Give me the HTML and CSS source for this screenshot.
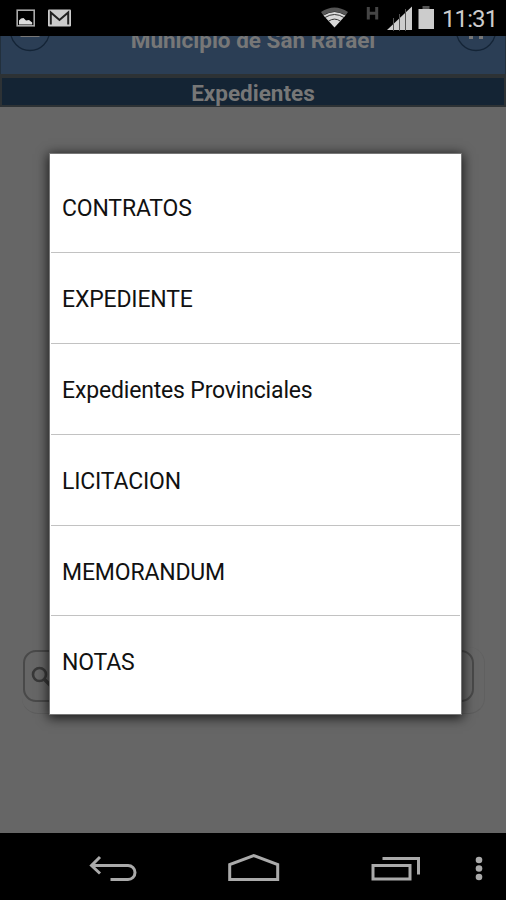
FILE: index.html
```html
<!DOCTYPE html>
<html lang="es">
<head>
  <meta charset="UTF-8">
  <meta name="viewport" content="width=device-width, initial-scale=1.0">
  <title>Municipio de San Rafael</title>
  <link rel="stylesheet" href="styles.css">
</head>
<body>
  <div class="status-bar">
    <svg class="status-left" width="90" height="36" viewBox="0 0 90 36">
      <rect x="17.2" y="10.2" width="17" height="15.6" fill="none" stroke="#aaa" stroke-width="1.6"/>
      <path d="M19 24.5v-4l2-2 2.500-.5 2.500 2.500 3-.5 3.200 2.500v2z" fill="#ddd"/>
      <rect x="48" y="9.500" width="23" height="17" rx="1" fill="#ccc"/>
      <path d="M50.800 24.500V12.500l8.700 7.500 8.700-7.500v12" fill="none" stroke="#222" stroke-width="2"/>
    </svg>
    <svg class="status-right" width="116" height="36" viewBox="0 0 116 36">
      <path d="M1 12Q14.500 3 28 12L25.500 15.500Q14.500 8 3.500 15.500Z" fill="#555"/>
      <path d="M3.500 15.500Q14.500 8.500 25.500 15.500L14.500 27.500Z" fill="#d8d8d8"/>
      <path d="M5 17.500Q14.500 11.500 24 17.500M8.500 21.200Q14.500 17 20.500 21.200" fill="none" stroke="#333" stroke-width="1"/>
      <path d="M48.300 7v12.500M56.700 7v12.500M48.300 13.300h9" fill="none" stroke="#454545" stroke-width="3"/>
      <path d="M67 30L92 6.500V30Z" fill="#ccc"/>
      <path d="M73.500 18v13M79.500 14v17M85.500 9v22" stroke="#555" stroke-width="1"/>
      <rect x="102.500" y="6" width="7" height="4" fill="#555"/>
      <rect x="98.500" y="9" width="15.500" height="20" fill="#ccc"/>
    </svg>
    <span class="clock">11:31</span>
  </div>

  <div class="header">
    <svg class="header-icon" width="42" height="38" viewBox="0 0 42 38">
      <circle cx="21" cy="-5" r="19.500" fill="none" stroke="#142436" stroke-width="1.300"/>
      <path d="M11.500 0h19" stroke="#777" stroke-width="2"/>
    </svg>
    <h1>Municipio de San Rafael</h1>
    <svg class="header-icon" width="42" height="38" viewBox="0 0 42 38">
      <circle cx="21" cy="-5" r="19.500" fill="none" stroke="#142436" stroke-width="1.300"/>
      <path d="M14 0h4v3h-4zM24 0h4v3h-4z" fill="#777"/>
    </svg>
  </div>
  <h2 class="section-title">Expedientes</h2>

  <div class="content">
    <div class="search-shadow">
      <div class="search-box">
        <svg width="26" height="26" viewBox="0 0 26 26">
          <circle cx="10.500" cy="10.500" r="6.500" fill="none" stroke="#383838" stroke-width="2.600"/>
          <path d="M15 15l7 7" stroke="#383838" stroke-width="3.500"/>
        </svg>
      </div>
    </div>
    <ul class="dialog">
      <li>CONTRATOS</li>
      <li>EXPEDIENTE</li>
      <li>Expedientes Provinciales</li>
      <li>LICITACION</li>
      <li>MEMORANDUM</li>
      <li>NOTAS</li>
    </ul>
  </div>

  <div class="nav-bar">
    <svg width="506" height="67" viewBox="0 0 506 67" fill="none" stroke="#aaa" stroke-width="3">
      <path d="M100 24l-8.500 8.500 8.500 8M92 32.500h36a7 7 0 0 1 0 14h-17.500"/>
      <path d="M229.700 46.500V31.500l24-9 24 9v15z"/>
      <path d="M373 32.500h37v13.500h-37zM382.500 25.500h36v16"/>
      <g fill="#aaa" stroke="none">
        <circle cx="479" cy="27" r="3.300"/>
        <circle cx="479" cy="35.500" r="3.300"/>
        <circle cx="479" cy="44" r="3.300"/>
      </g>
    </svg>
  </div>
</body>
</html>
```

FILE: styles.css
```css
body {
  margin: 0;
  width: 506px;
  height: 900px;
  overflow: hidden;
  display: flex;
  flex-direction: column;
  background-color: #666;
  font-family: Roboto, "Liberation Sans", sans-serif;
}

.status-bar {
  height: 36px;
  background-color: #000;
  display: flex;
}

.status-right {
  margin-left: 230px;
}

.clock {
  margin-left: 6px;
  line-height: 38px;
  font-size: 24px;
  letter-spacing: -0.9px;
  color: #ccc;
  white-space: nowrap;
}

.header {
  height: 38px;
  box-sizing: border-box;
  padding: 0 8px;
  border-left: 1px solid #22303d;
  border-right: 1px solid #22303d;
  background-color: #2b3e55;
  display: flex;
  justify-content: space-between;
  overflow: hidden;
}

.header h1 {
  margin: -9px 0 0;
  font-size: 22.5px;
  line-height: 27px;
  color: #777;
  white-space: nowrap;
}

.section-title {
  margin: 0;
  height: 33px;
  box-sizing: border-box;
  border: 2px solid #2d3235;
  border-top-width: 4px;
  background-color: #142434;
  font-size: 22.5px;
  line-height: 30px;
  text-align: center;
  color: #777;
}

.content {
  position: relative;
  display: flex;
  flex-direction: column;
  justify-content: flex-end;
  height: 726px;
  box-sizing: border-box;
  padding-bottom: 119px;
}

.search-shadow {
  box-sizing: border-box;
  height: 67px;
  margin: 0 21px 0 22px;
  padding: 3px 10px 12px 1px;
  border-radius: 16px;
  border-bottom: 1px solid #5d5d5d;
  border-right: 1px solid #606060;
}

.search-box {
  height: 52px;
  box-sizing: border-box;
  padding: 12px 4px;
  border: 2px solid #494949;
  border-radius: 13px;
}

/* the list opens over the page */
.dialog {
  position: absolute;
  top: 47px;
  left: 50px;
  width: 411px;
  height: 560px;
  box-sizing: border-box;
  margin: 0;
  padding: 8.4px 1px 0;
  list-style: none;
  background-color: #fff;
  box-shadow: 0 0 0 1px #777, 0 2px 11px 2px rgba(0, 0, 0, 0.75);
}

.dialog li {
  height: 90.8px;
  box-sizing: border-box;
  padding: 0 11px;
  border-bottom: 1px solid #c2c2c2;
  font-size: 23px;
  letter-spacing: -0.17px;
  line-height: 94px;
  color: #111;
}

.dialog li:last-child {
  border-bottom: none;
}

.nav-bar {
  height: 67px;
  background-color: #000;
}
```
